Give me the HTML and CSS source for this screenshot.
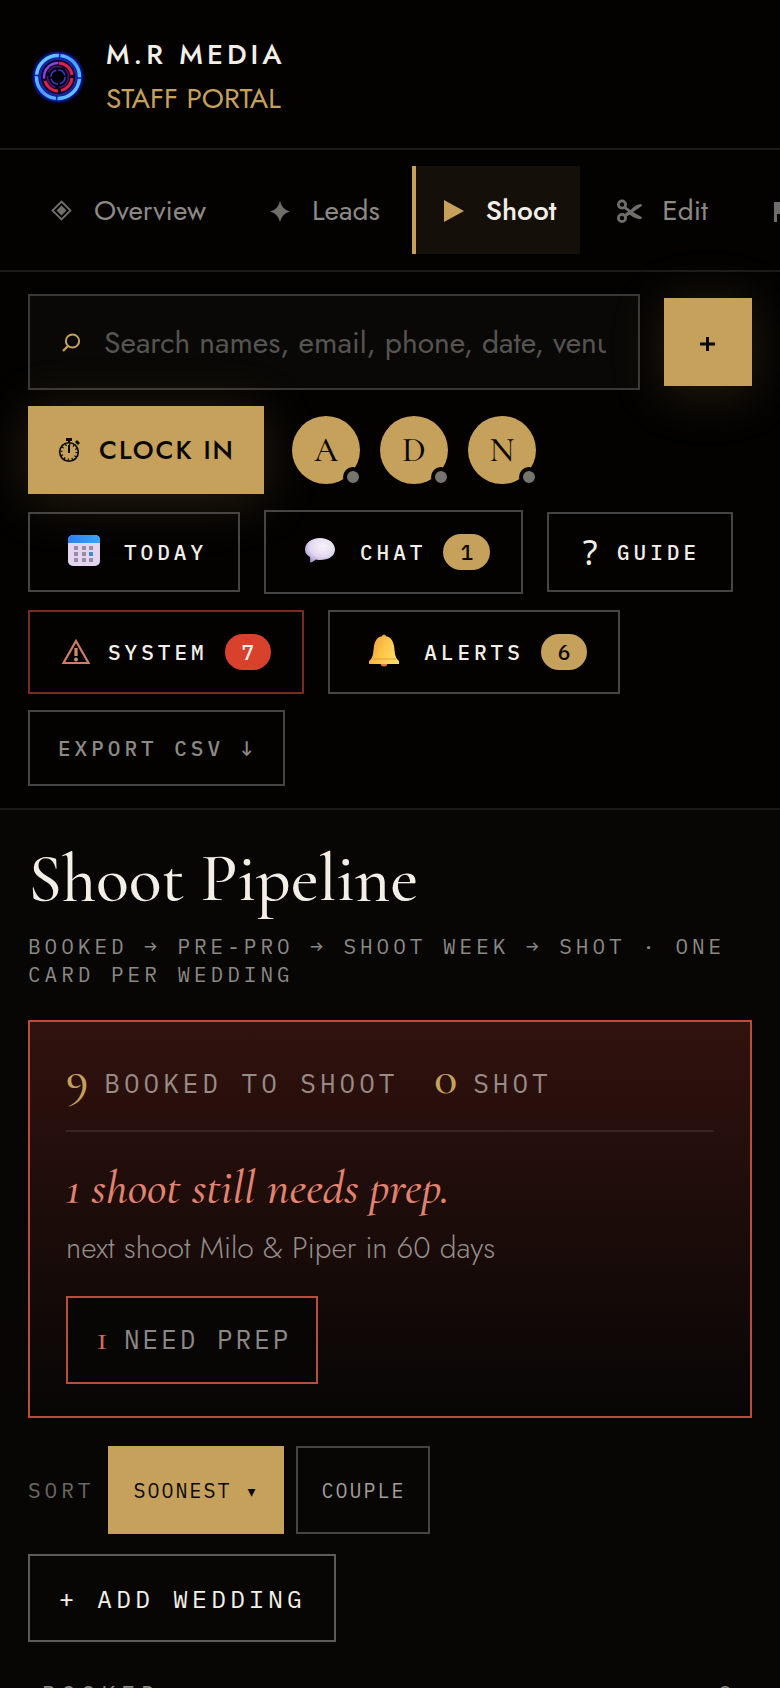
FILE: index.html
```html
<!DOCTYPE html>
<html lang="en">
<head>
<meta charset="utf-8">
<meta name="viewport" content="width=device-width, initial-scale=1">
<title>M.R Media Staff Portal</title>
<link rel="stylesheet" href="styles.css">
</head>
<body>
<header class="brand">
  <svg class="brand-logo" viewBox="0 0 60 60" aria-hidden="true">
    <defs>
      <linearGradient id="ring" x1="0" y1="0" x2="1" y2="1">
        <stop offset="0" stop-color="#6fdcff"/><stop offset=".5" stop-color="#4a9cff"/><stop offset="1" stop-color="#6ad2ff"/>
      </linearGradient>
      <radialGradient id="halo"><stop offset=".6" stop-color="#0a0a50"/><stop offset=".84" stop-color="#1a2ae0"/><stop offset="1" stop-color="#0a10a0" stop-opacity="0"/></radialGradient>
    </defs>
    <circle cx="30" cy="30" r="27" fill="url(#halo)"/>
    <circle cx="30" cy="30" r="18" fill="#07051c"/>
    <circle cx="30" cy="30" r="21.500" fill="none" stroke="url(#ring)" stroke-width="3.400" stroke-dasharray="32 1.770" stroke-dashoffset="-2"/>
    <circle cx="30" cy="30" r="18" fill="none" stroke="#1b22a8" stroke-width="2"/>
    <circle cx="30" cy="30" r="14" fill="none" stroke="#8f3fe0" stroke-width="2.400" stroke-dasharray="24 64" stroke-dashoffset="-42"/>
    <path d="M31 16a14 14 0 0 1 13 12M44 31a14 14 0 0 1-11 12.500M30 44a14 14 0 0 1-13-10" fill="none" stroke="#e0204a" stroke-width="3"/>
    <circle cx="30" cy="30" r="10.500" fill="none" stroke="#4b1668" stroke-width="1.500" stroke-dasharray="15 4"/>
    <circle cx="30" cy="30" r="7" fill="#020208" stroke="#3c42c4" stroke-width="1.400" stroke-dasharray="9 2"/>
  </svg>
  <div class="brand-text">
    <span class="brand-name">M.R MEDIA</span>
    <span class="brand-sub">STAFF PORTAL</span>
  </div>
</header>

<nav class="tabs" aria-label="Sections">
  <a class="tab" href="#overview">
    <svg class="tab-icon" viewBox="0 0 26 26" aria-hidden="true"><path d="M13.500 4.500 22.500 13.500 13.500 22.500 4.500 13.500Z" fill="none" stroke="currentColor" stroke-width="1.800"/><path d="M13.500 8.500 18.500 13.500 13.500 18.500 8.500 13.500Z" fill="currentColor"/></svg>
    Overview</a>
  <a class="tab" href="#leads">
    <svg class="tab-icon" viewBox="0 0 26 26" aria-hidden="true"><path d="M14 4Q16 12.500 24 14.500Q16 16.500 14 25Q12 16.500 4 14.500Q12 12.500 14 4Z" fill="currentColor"/></svg>
    Leads</a>
  <a class="tab tab-active" href="#shoot" aria-current="page">
    <svg class="tab-icon" viewBox="0 0 26 26" aria-hidden="true"><path d="M4 3 24 14 4 25Z" fill="currentColor"/></svg>
    Shoot</a>
  <a class="tab" href="#edit">
    <svg class="tab-icon" viewBox="-1 0 26 26" aria-hidden="true"><g fill="none" stroke="currentColor" stroke-width="2.800"><circle cx="5" cy="7.500" r="3.600"/><circle cx="5" cy="21" r="3.600"/></g><path d="M8 9 13.500 13Q19 7 24 7L25.500 8.500 9 20 7 17.500 11 14.500 6.500 11.500ZM15 14.500 25.500 20.500 24 22Q19 22.500 12.500 17.500Z" fill="currentColor"/></svg>
    Edit</a>
  <a class="tab" href="#deliver" aria-label="Deliver">
    <svg class="tab-icon" viewBox="0 0 26 26" aria-hidden="true"><path d="M6 5H24L20 11 24 17H9V25H6Z" fill="currentColor"/></svg>
  </a>
</nav>

<section class="toolbar" aria-label="Tools">
  <label class="search">
    <svg class="search-icon" viewBox="0 0 20 20" aria-hidden="true"><circle cx="10.500" cy="9" r="6.600" fill="none" stroke="currentColor" stroke-width="2"/><path d="M6 14 1 19" stroke="currentColor" stroke-width="2.400"/></svg>
    <input class="search-input" type="text" aria-label="Search" placeholder="Search names, email, phone, date, venue">
  </label>
  <button class="add-button" type="button" aria-label="Add">
    <svg class="plus" viewBox="0 0 16 20" aria-hidden="true"><path d="M7.500 5V19M0 12H15" stroke="currentColor" stroke-width="3"/></svg>
  </button>
  <button class="clock-button" type="button">
    <svg class="clock-icon" viewBox="0 0 24 26" aria-hidden="true"><circle cx="12" cy="15" r="9.300" fill="none" stroke="currentColor" stroke-width="1.600"/><circle cx="12" cy="15" r="7.600" fill="none" stroke="currentColor" stroke-width="2" stroke-dasharray="1.200 2.780"/><path d="M9 1H15V4H13V6H11V4H9ZM18 5 20 3 23 6 21 8ZM11 8H13V16H11Z" fill="currentColor"/></svg>
    CLOCK IN
  </button>
  <div class="avatars">
    <span class="avatar">A<i class="status"></i></span>
    <span class="avatar">D<i class="status"></i></span>
    <span class="avatar">N<i class="status"></i></span>
  </div>
  <button class="tool" type="button">
    <svg class="tool-icon" viewBox="0 0 36 36" aria-hidden="true">
      <defs><linearGradient id="cal" x2="1"><stop offset="0" stop-color="#2f7ff0"/><stop offset="1" stop-color="#35a5fb"/></linearGradient></defs>
      <rect x="2" y="1" width="32" height="31" rx="5" fill="#e3d5ee"/><path d="M2 9V6a5 5 0 0 1 5-5H29a5 5 0 0 1 5 5V9Z" fill="url(#cal)"/>
      <g fill="#998da5"><path d="M8 12h4v4H8zM16 12h4v4h-4zM23 12h4v4h-4zM8 18h4v4H8zM16 18h4v4h-4zM8 24h4v4H8zM16 24h4v4h-4zM23 24h4v4h-4z"/></g><path d="M23 18h4v4h-4z" fill="#3a8ddd"/>
    </svg>
    TODAY
  </button>
  <button class="tool tool-counted" type="button">
    <svg class="tool-icon" viewBox="0 0 36 36" aria-hidden="true">
      <defs><radialGradient id="bub" cx=".6" cy=".35" r=".7"><stop offset="0" stop-color="#f8f3fb"/><stop offset=".6" stop-color="#e3d8f0"/><stop offset="1" stop-color="#aa98cf"/></radialGradient></defs>
      <path d="M18 4C26.500 4 33 9 33 15.500S26.500 26 18 26Q16 26 14 25.500Q11 28 8 28.500Q8.500 26 8 23Q3 20 3 15.500C3 9 9.500 4 18 4Z" fill="url(#bub)"/>
    </svg>
    CHAT <span class="count">1</span>
  </button>
  <button class="tool tool-guide" type="button"><span class="question">?</span>GUIDE</button>
  <button class="tool tool-counted tool-alarm" type="button">
    <svg class="tool-icon" viewBox="0 0 36 36" aria-hidden="true"><path d="M18 7 30.500 29H5.500Z" fill="none" stroke="#cf7c69" stroke-width="2.200"/><path d="M16.400 14h3.200v8h-3.200z" fill="#cf8d68"/><circle cx="18" cy="25.500" r="2" fill="#cf8d68"/></svg>
    SYSTEM <span class="count count-alarm">7</span>
  </button>
  <button class="tool tool-counted" type="button">
    <svg class="tool-icon" viewBox="0 0 36 36" aria-hidden="true">
      <defs><linearGradient id="bell" x2="1" y2=".4"><stop offset="0" stop-color="#ee9140"/><stop offset=".5" stop-color="#fcc044"/><stop offset="1" stop-color="#ffdb62"/></linearGradient></defs>
      <circle cx="18" cy="29" r="3.500" fill="#db7b48"/><circle cx="18" cy="2.500" r="2" fill="#eb9b45"/>
      <path d="M18 2C24 2 27 6 28 12L29 20Q30 25 33 27V30H3V27Q6 25 7 20L8 12C9 6 12 2 18 2Z" fill="url(#bell)"/><path d="M6 25H30" stroke="#e99a38" stroke-width="1"/>
    </svg>
    ALERTS <span class="count">6</span>
  </button>
  <button class="tool tool-export" type="button">EXPORT CSV ↓</button>
</section>

<main class="page">
  <h1 class="page-title">Shoot Pipeline</h1>
  <p class="page-sub">BOOKED → PRE-PRO → SHOOT WEEK → SHOT · ONE CARD PER WEDDING</p>

  <section class="summary" aria-label="Summary">
    <div class="stats">
      <span class="stat"><b class="stat-value">9</b>BOOKED TO SHOOT</span>
      <span class="stat"><b class="stat-value">0</b>SHOT</span>
    </div>
    <p class="headline">1 shoot still needs prep.</p>
    <p class="next">next shoot Milo &amp; Piper in 60 days</p>
    <button class="prep" type="button"><b class="prep-value">1</b>NEED PREP</button>
  </section>

  <div class="sort">
    <span class="sort-label">SORT</span>
    <button class="sort-button sort-current" type="button">SOONEST <span class="caret">▾</span></button>
    <button class="sort-button" type="button">COUPLE</button>
  </div>
  <button class="add-wedding" type="button">+ ADD WEDDING</button>

  <div class="stage"><span>BOOKED</span><span>9</span></div>
</main>
</body>
</html>
```
FILE: styles.css
```css
:root {
  --gold: #c5a15b;
  --ink: #0a0703;
  --cream: #f3efe7;
  --muted: #8c8984;
  --line: #1b1a18;
  --edge: #464543;
  --red: #b94d3d;
  --sans: Jost, Lato, sans-serif;
  --serif: "Cormorant Garamond", "Liberation Serif", serif;
  --mono: "IBM Plex Mono", "DejaVu Sans Mono", monospace;
}

* { box-sizing: border-box; }

html { background: #070604; }

body {
  margin: 0;
  height: 100vh;
  overflow: hidden;
  color: var(--cream);
  font-family: var(--sans);
}

h1, p { margin: 0; font-weight: 400; }

button {
  margin: 0;
  border-radius: 0;
  color: inherit;
  background: none;
  white-space: nowrap;
}

.brand {
  display: flex;
  align-items: center;
  gap: 18px;
  padding: 33px 28px 27px;
  border-bottom: 2px solid var(--line);
  background: #030201;
}
.brand-logo { width: 60px; height: 60px; }
.brand-text {
  display: flex;
  flex-direction: column;
  font-size: 28px;
  line-height: 44px;
}
.brand-name { font-weight: 500; letter-spacing: 4px; }
.brand-sub { color: var(--gold); }

.tabs {
  display: flex;
  gap: 8px;
  padding: 16px 20px;
  overflow: hidden;
  border-bottom: 2px solid var(--line);
  background: #030201;
}
.tab {
  display: flex;
  flex: none;
  align-items: center;
  gap: 20px;
  height: 88px;
  padding: 0 24px;
  border-left: 4px solid transparent;
  color: var(--muted);
  font-size: 28px;
  text-decoration: none;
}
.tab-icon { width: 26px; height: 26px; color: #706e69; }
.tab-active {
  border-color: var(--gold);
  color: var(--cream);
  background: #150f09;
  font-weight: 500;
}
.tab-active .tab-icon { color: var(--gold); }

.toolbar {
  display: flex;
  flex-wrap: wrap;
  align-items: center;
  gap: 16px 24px;
  padding: 22px 28px;
  border-bottom: 2px solid var(--line);
  background: #030201;
}
.search {
  display: flex;
  flex: 0 0 calc(100% - 112px);
  align-items: center;
  gap: 22px;
  min-width: 0;
  height: 96px;
  padding: 0 32px;
  border: 2px solid #3a3835;
  background: #090806;
}
.search-icon { flex: none; width: 20px; height: 20px; color: var(--gold); }
.search-input {
  flex: 1;
  min-width: 0;
  padding: 0;
  border: 0;
  outline: 0;
  color: var(--cream);
  background: none;
  font-family: var(--sans);
  font-size: 30px;
}
.search-input::placeholder { color: #565450; opacity: 1; }
.add-button, .clock-button {
  display: flex;
  align-items: center;
  justify-content: center;
  height: 88px;
  border: 0;
  color: var(--ink);
  background: var(--gold);
  box-shadow: 0 6px 56px rgba(197, 161, 91, 0.2);
}
.add-button { width: 88px; padding: 0; }
.plus { width: 16px; height: 20px; }
.clock-button {
  gap: 18px;
  padding: 0 29px;
  font: 500 26px var(--sans);
  letter-spacing: 2px;
}
.clock-icon { width: 24px; height: 26px; }
.avatars { display: flex; gap: 20px; margin-left: 4px; }
.avatar {
  position: relative;
  display: grid;
  place-items: center;
  width: 68px;
  height: 68px;
  border-radius: 50%;
  color: var(--ink);
  background: var(--gold);
  font: 500 34px var(--serif);
}
.status {
  position: absolute;
  right: -3px;
  bottom: -3px;
  width: 20px;
  height: 20px;
  border: 4px solid #030201;
  border-radius: 50%;
  background: #77736f;
}

.tool {
  display: flex;
  align-items: center;
  gap: 14px;
  height: 80px;
  padding: 0 31px 0 28px;
  border: 2px solid var(--edge);
  font: 500 21px var(--mono);
  letter-spacing: 4px;
}
.tool-icon { width: 36px; height: 36px; margin: 0 8px; }
.tool-counted { height: 84px; }
.question {
  width: 26px;
  font: 34px "Noto Sans", sans-serif;
  letter-spacing: 0;
  text-align: center;
}
.count {
  margin-left: 3px;
  padding: 0 13px 0 17px;
  border-radius: 18px;
  color: var(--ink);
  background: var(--gold);
  line-height: 36px;
}
.tool-alarm { border-color: #7a2b20; }
.tool-alarm .tool-icon { margin: 0; }
.count-alarm { color: var(--cream); background: #d8412c; }
.tool-export { height: 76px; padding: 0 26px 0 28px; color: var(--muted); }

.page { padding: 31px 28px 0; }
.page-title {
  font-family: var(--serif);
  font-size: 68px;
  font-weight: 500;
  line-height: 76px;
}
.page-sub {
  margin-top: 15px;
  color: var(--muted);
  font-family: var(--mono);
  font-size: 21px;
  line-height: 28px;
  letter-spacing: 4px;
}

.summary {
  margin-top: 32px;
  padding: 32px 36px;
  border: 2px solid var(--red);
  background: linear-gradient(#31120e, #070605);
}
.stats {
  display: flex;
  gap: 36px;
  align-items: baseline;
  height: 78px;
  border-bottom: 2px solid #382420;
  color: #998b86;
  font-family: var(--mono);
  font-size: 26px;
  line-height: 48px;
  letter-spacing: 4px;
}
.stat { display: flex; align-items: baseline; gap: 16px; }
.stat-value {
  color: var(--gold);
  font-family: var(--serif);
  font-size: 48px;
  font-weight: 500;
  letter-spacing: 0;
}
.headline {
  margin-top: 32px;
  color: #e08370;
  font-family: var(--serif);
  font-size: 48px;
  font-style: italic;
  font-weight: 500;
  line-height: 48px;
}
.next {
  margin-top: 14px;
  color: #948d88;
  font-size: 30px;
  font-weight: 300;
  line-height: 44px;
}
.prep {
  display: flex;
  align-items: baseline;
  gap: 16px;
  height: 88px;
  margin-top: 26px;
  padding: 0 25px 0 28px;
  border: 2px solid var(--red);
  color: var(--muted);
  background: #070605;
  font-family: var(--mono);
  font-size: 26px;
  line-height: 80px;
  letter-spacing: 3px;
}
.prep-value {
  color: #d06c58;
  font-family: var(--serif);
  font-size: 36px;
  font-weight: 500;
  letter-spacing: 0;
}

.sort {
  display: flex;
  align-items: center;
  gap: 12px;
  margin-top: 28px;
}
.sort-label {
  margin-right: 2px;
  color: #6b6863;
  font: 21px var(--mono);
  letter-spacing: 4px;
}
.sort-button {
  height: 88px;
  padding: 0 23px;
  border: 2px solid var(--edge);
  color: #a29f99;
  font: 20px var(--mono);
  letter-spacing: 2px;
}
.sort-current {
  border-color: var(--gold);
  color: var(--ink);
  background: var(--gold);
}
.add-wedding {
  display: block;
  height: 88px;
  margin-top: 20px;
  padding: 0 28px 0 29px;
  border: 2px solid #5c5b58;
  font: 25px var(--mono);
  letter-spacing: 4px;
}
.stage {
  display: flex;
  justify-content: space-between;
  margin-top: 36px;
  padding: 0 14px;
  color: var(--muted);
  font: 23px/30px var(--mono);
  letter-spacing: 6px;
}
```
